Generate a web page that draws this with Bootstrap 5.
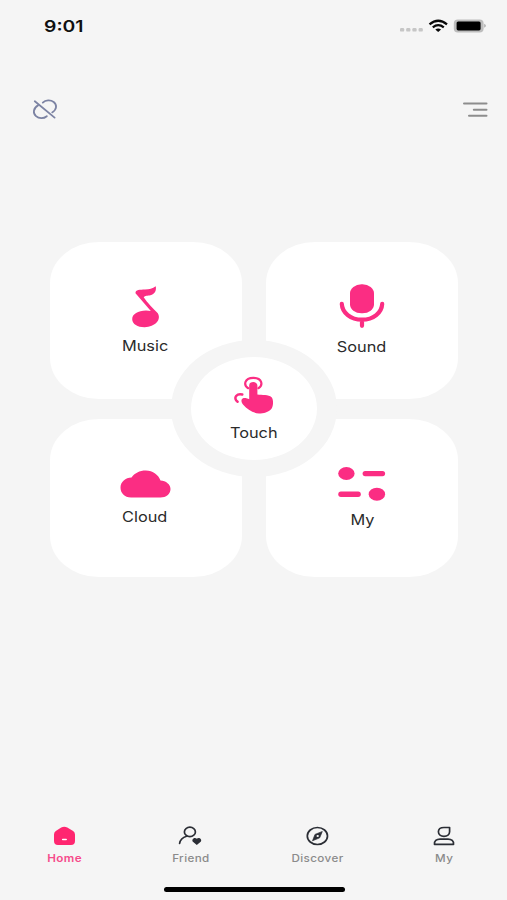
<!DOCTYPE html>
<html lang="en">
<head>
<meta charset="utf-8">
<meta name="viewport" content="width=device-width, initial-scale=1">
<title>Home</title>
<link href="https://cdn.jsdelivr.net/npm/bootstrap@5.3.0/dist/css/bootstrap.min.css" rel="stylesheet">
<style>
  body { background: #f5f5f5; font-family: Inter, "Liberation Sans", sans-serif; color: #222; }
  svg { display: block; flex: none; }
  .screen { width: 507px; height: 900px; }
  .status-bar { height: 52px; padding: 0 20px 0 44px; }
  .clock { font-size: 16px; font-weight: 600; line-height: 20px; color: #111; transform: scaleX(1.21); transform-origin: left; }
  .tool-bar { height: 116px; padding: 0 18px 0 31px; }
  .tiles { display: grid; grid-template-columns: 192px 192px; grid-template-rows: 157px 158px; column-gap: 24px; row-gap: 20px; margin: 73.5px 49px 0 50px; }
  .tile { background: #fff; border-radius: 49px / 41px; }
  .tile-music { padding: 40px 2px 0 0; }
  .tile-sound { padding-top: 40px; }
  .tile-cloud { padding: 49px 2px 0 0; }
  .tile-my { padding-top: 45px; }
  .tile-label { font-size: 14.2px; line-height: 20px; color: #2b2b2b; margin-top: 7px; transform: scaleX(1.15); }
  .tile-music .tile-label { margin-top: 6px; }
  .pink { fill: #fb2d83; }
  .pink-line { fill: none; stroke: #fb2d83; stroke-linecap: round; stroke-linejoin: round; }
  .touch { width: 166px; height: 137px; left: 121px; top: 98.5px; padding-top: 17px; border: solid #f5f5f5; border-width: 17px 20px; border-radius: 50%; background: #fff; }
  .tabs { padding-left: 1px; margin-bottom: 21px; }
  .tab-name { font-size: 10.5px; font-weight: 500; line-height: 14px; letter-spacing: .35px; color: #8b8b8b; transform: scaleX(1.11); margin-top: 5px; }
  .tab-name.current { color: #f64a8b; font-weight: 600; }
  .ink { fill: none; stroke: #2b2e35; stroke-width: 1.7; stroke-linecap: round; stroke-linejoin: round; }
  .home-line { width: 181px; height: 5px; background: #000; margin: 0 0 8px 163.5px; }
</style>
</head>
<body>
<div class="screen d-flex flex-column overflow-hidden">
  <header class="status-bar d-flex align-items-center justify-content-between">
    <div class="clock">9:01</div>
    <svg width="90" height="20" viewBox="397 16 90 20">
      <g fill="#c6c6c6"><rect x="400" y="28" width="4.2" height="3.6" rx="1.2"/><rect x="406.2" y="28" width="4.2" height="3.6" rx="1.2"/><rect x="412.4" y="28" width="4.2" height="3.6" rx="1.2"/><rect x="418.6" y="28" width="4.2" height="3.6" rx="1.2"/></g>
      <g fill="none" stroke="#090909" stroke-width="2.3"><path d="M429.5 24.3Q438.2 17.3 447 24.3"/><path d="M432.8 27.3Q438.2 23 443.8 27.3"/></g>
      <path d="M435.3 29.6Q438.2 27.4 441.1 29.6L438.2 32Z" fill="#090909"/>
      <rect x="453.8" y="19.4" width="29.8" height="13" rx="4" fill="#bdbdbd"/><rect x="456.6" y="21.4" width="24" height="9" rx="1.6"/><path d="M484.4 23.8Q487 25.8 484.4 27.8Z" fill="#999"/>
    </svg>
  </header>
  <nav class="tool-bar d-flex align-items-center justify-content-between">
    <svg width="28" height="24" viewBox="31 98 28 24" fill="none" stroke="#7c83a3" stroke-width="1.8" stroke-linecap="round">
      <path d="M34.8 101.3L54.6 117.6"/><path d="M42.8 102.6C45.5 100 50.5 99.6 53.7 102C57 104.6 57.2 109.3 52.2 112.4"/><path d="M38 105.4C33 108.3 32.8 113.3 36 116.2C38.9 118.9 43.8 118.8 46.8 116.2"/>
    </svg>
    <svg width="27" height="20" viewBox="462 99 27 20" fill="none" stroke="#8d8d8d" stroke-width="2" stroke-linecap="round">
      <path d="M464 102.6H486.5M473.8 108.8H486.5M469 114.8H486.5"/>
    </svg>
  </nav>
  <main class="tiles position-relative">
    <section class="tile tile-music d-flex flex-column align-items-center">
      <svg width="40" height="48" viewBox="125 282 40 48"><path class="pink" d="M155.7 286.2C156.7 290.5 154.7 294.2 150.4 295.2C147.3 296 145.3 295.2 143.7 297.3C147.2 302.8 153.6 308.8 157.8 313.3C161.6 319.8 155.3 326.9 144.7 327.2C137.8 327.3 132.3 324.1 132.2 319.2C132.2 314.1 138.1 310.6 146 310.6C147.8 310.6 149.4 310.9 150.8 311.1L135.5 293.3C135.2 289.6 140.1 290 145 289.6C149.3 289.3 152.5 288.6 155.7 286.2Z"/></svg>
      <div class="tile-label">Music</div>
    </section>
    <section class="tile tile-sound d-flex flex-column align-items-center">
      <svg width="52" height="48" viewBox="336 282 52 48"><rect class="pink" x="350" y="284.3" width="24" height="29" rx="11.5" ry="9"/><path class="pink-line" stroke-width="4.2" d="M341.8 303.8C342.2 312.5 350.5 319.7 362 319.7C373.5 319.7 381.8 312.5 382.2 303.8M362 320V325.8"/></svg>
      <div class="tile-label">Sound</div>
    </section>
    <section class="tile tile-cloud d-flex flex-column align-items-center">
      <svg width="54" height="32" viewBox="118.5 468 54 32"><path class="pink" d="M131.5 497.5C125 497.5 121 493 121 487.5C121 482 126 477.7 132 477.6C135 473.3 140 470.6 146.3 470.6C153.5 470.6 159 475 161 480.6C166.5 481 171 484.4 171 489C171 494 166.5 497.5 161 497.5Z"/></svg>
      <div class="tile-label">Cloud</div>
    </section>
    <section class="tile tile-my d-flex flex-column align-items-center">
      <svg width="52" height="38" viewBox="336 464 52 38"><g class="pink"><ellipse cx="346.4" cy="473.5" rx="8.2" ry="6.5"/><ellipse cx="376.9" cy="494.2" rx="8.2" ry="6.5"/><rect x="362.6" y="470.9" width="22.5" height="5.3" rx="2.6"/><rect x="338.3" y="491.6" width="22.5" height="5.3" rx="2.6"/></g></svg>
      <div class="tile-label mt-2">My</div>
    </section>
    <section class="touch position-absolute d-flex flex-column align-items-center">
      <svg width="44" height="42" viewBox="232 374 44 42"><path class="pink-line" stroke-width="2.2" d="M248.2 388.2C243.2 385.2 244.4 377.8 253.3 377.8C262.2 377.8 263.4 385.2 258.4 388.2"/><path class="pink" d="M249.2 399.2V385.4C249.2 381 257.4 381 257.4 385.4V394.4C262 395.2 268.5 394 271.6 397.2C273.7 399.6 273.4 406 271.5 408.8C268.5 412.4 263.5 413.5 259 413.5C252.5 413.3 247.2 409 243.2 404.8C241 402.2 240.8 399.2 243 398.3C245 397.5 247.5 398.6 249.2 399.2Z"/><path class="pink-line" stroke-width="2.5" d="M242.3 394.5C237.3 393.2 232.4 397.5 237.6 401.8"/></svg>
      <div class="tile-label">Touch</div>
    </section>
  </main>
  <footer class="mt-auto">
    <div class="tabs row g-0 row-cols-4">
      <div class="col d-flex flex-column align-items-center"><svg width="24" height="22" viewBox="52 825 24 22"><path d="M61.2 827.6Q64.2 825.8 67.3 827.6L73.1 831.1Q75 832.2 75 834.5V841Q75 844.9 71 844.9H58Q54 844.9 54 841V834.5Q54 832.2 55.8 831.1Z" fill="#ff2670"/><path d="M62.7 839.5H66.2" stroke="#fff" stroke-width="1.5" stroke-linecap="round"/></svg><div class="tab-name current">Home</div></div>
      <div class="col d-flex flex-column align-items-center"><svg width="26" height="22" viewBox="178.4 825 26 22"><ellipse class="ink" cx="190.3" cy="831.9" rx="5.5" ry="4.7"/><path class="ink" d="M187 836.2C183 837.3 180.5 840 180 843.4"/><path fill="#2b2e35" d="M197.2 844.9L193.6 842C191.7 840.2 193.4 837.9 195.3 837.9Q196.5 837.9 197.2 838.8Q197.9 837.9 199.1 837.9C201 837.9 202.7 840.2 200.8 842Z"/></svg><div class="tab-name">Friend</div></div>
      <div class="col d-flex flex-column align-items-center"><svg width="24" height="22" viewBox="305 825 24 22"><ellipse class="ink" cx="317.4" cy="836" rx="10.1" ry="8.5"/><path d="M322.3 831.5L319.7 837.8L312.5 840.8L315 834.4Z" fill="#2b2e35" stroke="#2b2e35" stroke-width=".7" stroke-linejoin="round"/><ellipse cx="317.7" cy="836" rx="1.2" ry="1" fill="#f5f5f5"/></svg><div class="tab-name">Discover</div></div>
      <div class="col d-flex flex-column align-items-center"><svg width="26" height="22" viewBox="431 825 26 22"><path class="ink" d="M449.6 827.5V831.8C449.6 834.4 447.2 836.3 444 836.3C440.8 836.3 438.4 834.4 438.4 831.8C438.4 829.2 440.7 827.5 444 827.5Z"/><path class="ink" d="M434.5 844.4H453.5C453.9 841 451.5 839.1 448 839.1H440C436.5 839.1 434.1 841 434.5 844.4Z"/></svg><div class="tab-name">My</div></div>
    </div>
    <div class="home-line rounded-pill"></div>
  </footer>
</div>
<script src="https://cdn.jsdelivr.net/npm/bootstrap@5.3.0/dist/js/bootstrap.bundle.min.js"></script>
</body>
</html>
